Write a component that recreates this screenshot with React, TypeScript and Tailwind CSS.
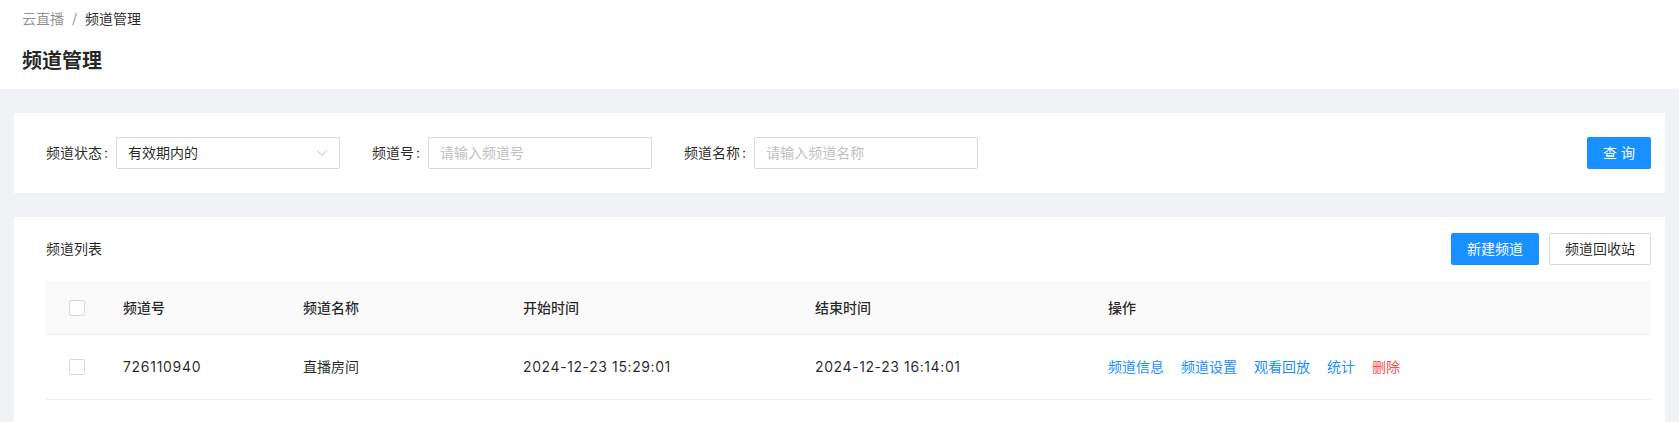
import React from 'react';

const font = { fontFamily: 'Inter, "Noto Sans CJK SC", sans-serif' };

const cols = 'grid grid-cols-[61px_180px_220px_292px_293px_1fr]';

const Checkbox = () => (
    <span className="block w-4 h-4 border border-[#d9d9d9] rounded-[2px] bg-white" />
);

const Field = ({ label, children }: { label: string; children: React.ReactNode }) => (
    <div className="flex items-center mr-8">
        <span className="text-sm text-[rgba(0,0,0,0.85)]">{label}</span>
        <span className="text-sm text-[rgba(0,0,0,0.85)] ml-[2px] mr-2">:</span>
        {children}
    </div>
);

export default function App() {
    const actions = ['频道信息', '频道设置', '观看回放', '统计'];

    return (
        <div className="min-h-[422px] bg-[#f0f2f5]" style={font}>
            {/* page header */}
            <div className="bg-white pl-[22px] pt-[8px] pb-[14px]">
                <div className="flex items-center text-sm leading-[22px]">
                    <span className="text-[rgba(0,0,0,0.45)]">云直播</span>
                    <span className="mx-2 text-[rgba(0,0,0,0.45)]">/</span>
                    <span className="text-[rgba(0,0,0,0.85)]">频道管理</span>
                </div>
                <div className="mt-[17px] text-xl leading-7 font-semibold text-[rgba(0,0,0,0.85)]">频道管理</div>
            </div>

            {/* filter */}
            <div className="mx-[14px] mt-6 bg-white h-20 pl-8 pr-[14px] flex items-center">
                <Field label="频道状态">
                    <div className="w-[224px] h-8 border border-[#d9d9d9] rounded-[2px] flex items-center justify-between pl-[11px] pr-[11px]">
                        <span className="text-sm text-[rgba(0,0,0,0.85)]">有效期内的</span>
                        <svg width="12" height="8" viewBox="0 0 12 8" className="text-[#bfbfbf]">
                            <polyline points="1,1.5 6,6.5 11,1.5" fill="none" stroke="currentColor" strokeWidth="1" />
                        </svg>
                    </div>
                </Field>
                <Field label="频道号">
                    <div className="w-[224px] h-8 border border-[#d9d9d9] rounded-[2px] flex items-center px-[11px]">
                        <span className="text-sm text-[#bfbfbf]">请输入频道号</span>
                    </div>
                </Field>
                <Field label="频道名称">
                    <div className="w-[224px] h-8 border border-[#d9d9d9] rounded-[2px] flex items-center px-[11px]">
                        <span className="text-sm text-[#bfbfbf]">请输入频道名称</span>
                    </div>
                </Field>
                <button className="ml-auto w-16 h-8 bg-[#1890ff] text-white text-sm rounded-[2px]">查 询</button>
            </div>

            {/* list */}
            <div className="mx-[14px] mt-6 bg-white pl-8 pr-[14px] pt-4 pb-6">
                <div className="flex items-center h-8">
                    <span className="text-sm text-[rgba(0,0,0,0.85)]">频道列表</span>
                    <div className="ml-auto flex gap-[10px]">
                        <button className="w-[88px] h-8 bg-[#1890ff] text-white text-sm rounded-[2px]">新建频道</button>
                        <button className="w-[102px] h-8 bg-white border border-[#d9d9d9] text-[rgba(0,0,0,0.85)] text-sm rounded-[2px]">频道回收站</button>
                    </div>
                </div>

                <div className="mt-4 text-sm">
                    <div className={`${cols} h-[54px] items-center bg-[#fafafa] border-b border-[#f0f0f0] font-medium text-[rgba(0,0,0,0.85)]`}>
                        <div className="flex justify-center"><Checkbox /></div>
                        <div className="px-4">频道号</div>
                        <div className="px-4">频道名称</div>
                        <div className="px-4">开始时间</div>
                        <div className="px-4">结束时间</div>
                        <div className="px-4">操作</div>
                    </div>
                    <div className={`${cols} h-[65px] items-center border-b border-[#f0f0f0] text-[rgba(0,0,0,0.85)]`}>
                        <div className="flex justify-center"><Checkbox /></div>
                        <div className="px-4 tracking-[0.7px]">726110940</div>
                        <div className="px-4">直播房间</div>
                        <div className="px-4 tracking-[0.6px]">2024-12-23 15:29:01</div>
                        <div className="px-4 tracking-[0.6px]">2024-12-23 16:14:01</div>
                        <div className="px-4 flex">
                            {actions.map((a) => (
                                <span key={a} className="mr-[17px] text-[#1890ff]">{a}</span>
                            ))}
                            <span className="text-[#ff4d4f]">删除</span>
                        </div>
                    </div>
                </div>
            </div>
        </div>
    );
}
